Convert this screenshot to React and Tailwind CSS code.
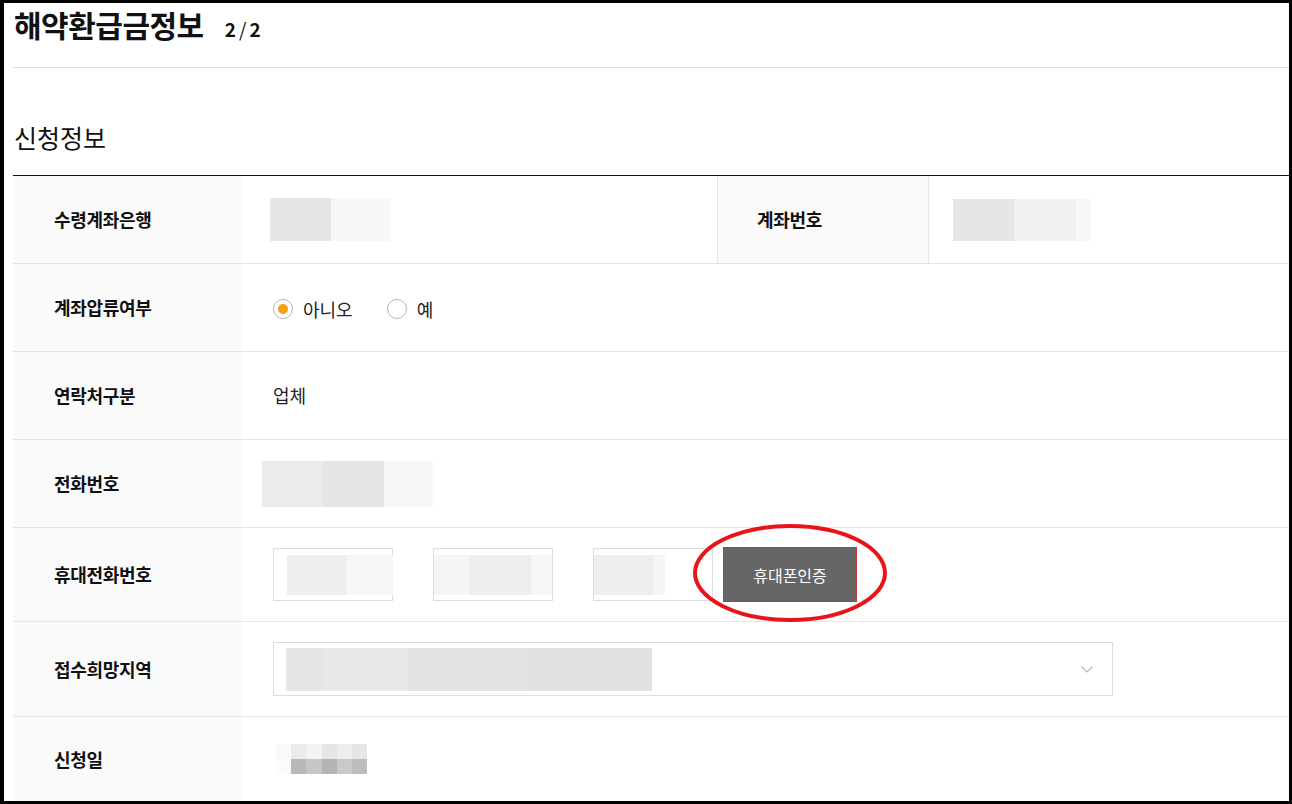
import React from 'react';

const font = { fontFamily: '"Noto Sans CJK KR", "Noto Sans", sans-serif' };

const Label = ({ children }) => (
  <div className="w-[229px] shrink-0 bg-[#fafafa] flex items-center pl-[41px] text-[18px] font-bold text-[#111] tracking-[-0.3px]">
    {children}
  </div>
);

const Blur = ({ blocks, h }) => (
  <div className={`flex ${h}`}>
    {blocks.map(([w, c], i) => (
      <div key={i} className={`${w} ${c}`}></div>
    ))}
  </div>
);

const Radio = ({ checked, label }) => (
  <label className="flex items-center gap-[10px]">
    <span className="w-[20px] h-[20px] rounded-full border border-[#b5b5b5] bg-white flex items-center justify-center">
      {checked && <span className="w-[10px] h-[10px] rounded-full bg-[#f2a20c]"></span>}
    </span>
    <span className="text-[18px] text-[#222]">{label}</span>
  </label>
);

const PhoneBox = ({ blocks, pl }) => (
  <div className={`w-[120px] h-[53px] border border-[#dcdcdc] bg-white flex items-center ${pl}`}>
    <Blur h="h-[40px]" blocks={blocks} />
  </div>
);

export default function App() {
  return (
    <div style={font} className="w-[1292px] h-[804px] bg-white border-l-4 border-r-[3px] border-t-[3px] border-b-[3px] border-black overflow-hidden">
      <div className="pl-[9px]">
        <div className="h-[64px] flex items-baseline pl-[1px] pt-[2px]">
          <h1 className="text-[30px] leading-[38px] font-bold text-[#111] tracking-[-0.5px]">해약환급금정보</h1>
          <span className="ml-[21px] text-[19px] font-bold text-[#111]">
            2<span className="font-normal mx-[3px]">/</span>2
          </span>
        </div>
        <div className="h-px bg-[#dddddd]"></div>
        <div className="h-[107px] pt-[53px] pl-[1px]">
          <h2 className="text-[25px] leading-[32px] text-[#111]">신청정보</h2>
        </div>

        <div className="border-t border-[#111]">
          {/* 수령계좌은행 / 계좌번호 */}
          <div className="flex h-[88px] border-b border-[#e5e5e5]">
            <Label>수령계좌은행</Label>
            <div className="w-[475px] flex items-center pl-[28px]">
              <Blur h="h-[43px]" blocks={[['w-[61px]', 'bg-[#e6e6e6]'], ['w-[60px]', 'bg-[#f8f8f8]']]} />
            </div>
            <div className="w-[212px] shrink-0 bg-[#fafafa] border-l border-r border-[#e5e5e5] flex items-center pl-[39px] text-[18px] font-bold text-[#111] tracking-[-0.3px]">
              계좌번호
            </div>
            <div className="flex-1 flex items-center pl-[24px]">
              <Blur h="h-[42px]" blocks={[['w-[61px]', 'bg-[#e6e6e6]'], ['w-[62px]', 'bg-[#f0f0f0]'], ['w-[15px]', 'bg-[#f8f8f8]']]} />
            </div>
          </div>

          {/* 계좌압류여부 */}
          <div className="flex h-[88px] border-b border-[#e5e5e5]">
            <Label>계좌압류여부</Label>
            <div className="flex items-center gap-[34px] pl-[31px] pt-[3px]">
              <Radio checked label="아니오" />
              <Radio label="예" />
            </div>
          </div>

          {/* 연락처구분 */}
          <div className="flex h-[88px] border-b border-[#e5e5e5]">
            <Label>연락처구분</Label>
            <div className="flex items-center pl-[31px] text-[18px] text-[#222]">업체</div>
          </div>

          {/* 전화번호 */}
          <div className="flex h-[88px] border-b border-[#e5e5e5]">
            <Label>전화번호</Label>
            <div className="flex items-center pl-[20px]">
              <Blur h="h-[46px]" blocks={[['w-[61px]', 'bg-[#ebebeb]'], ['w-[61px]', 'bg-[#e6e6e6]'], ['w-[49px]', 'bg-[#f8f8f8]']]} />
            </div>
          </div>

          {/* 휴대전화번호 */}
          <div className="flex h-[94px] border-b border-[#e5e5e5]">
            <Label>휴대전화번호</Label>
            <div className="flex items-center pl-[31px] gap-[40px]">
              <PhoneBox pl="pl-[13px]" blocks={[['w-[59px]', 'bg-[#ededed]'], ['w-[47px]', 'bg-[#f6f6f6]']]} />
              <PhoneBox pl="pl-0" blocks={[['w-[36px]', 'bg-[#f5f5f5]'], ['w-[61px]', 'bg-[#ededed]'], ['w-[21px]', 'bg-[#f7f7f7]']]} />
              <div className="flex items-center gap-[10px]">
                <PhoneBox pl="pl-0" blocks={[['w-[59px]', 'bg-[#ededed]'], ['w-[12px]', 'bg-[#f5f5f5]']]} />
                <div className="relative">
                  <button className="w-[134px] h-[55px] bg-[#666666] border border-[#c0392b] text-white text-[16px]">
                    휴대폰인증
                  </button>
                  <svg className="absolute left-[-31px] top-[-24px] pointer-events-none" width="196" height="100" viewBox="0 0 196 100">
                    <ellipse cx="98" cy="50" rx="95" ry="47" fill="none" stroke="#e8141a" strokeWidth="4" />
                  </svg>
                </div>
              </div>
            </div>
          </div>

          {/* 접수희망지역 */}
          <div className="flex h-[95px] border-b border-[#e5e5e5]">
            <Label>접수희망지역</Label>
            <div className="flex items-center pl-[31px]">
              <div className="w-[840px] h-[54px] border border-[#dcdcdc] bg-white flex items-center justify-between pl-[12px] pr-[18px]">
                <Blur h="h-[43px]" blocks={[['w-[37px]', 'bg-[#e6e6e6]'], ['w-[85px]', 'bg-[#e8e8e8]'], ['w-[122px]', 'bg-[#e3e3e3]'], ['w-[122px]', 'bg-[#e1e1e1]']]} />
                <svg width="14" height="10" viewBox="0 0 14 10">
                  <path d="M1.5 2.5 L7 8 L12.5 2.5" fill="none" stroke="#b8b8b8" strokeWidth="1.2" />
                </svg>
              </div>
            </div>
          </div>

          {/* 신청일 */}
          <div className="flex h-[84px]">
            <Label>신청일</Label>
            <div className="flex items-center pl-[34px]">
              <div className="flex flex-col">
                <Blur h="h-[15px]" blocks={[['w-[15px]', 'bg-[#f9f9f9]'], ['w-[15px]', 'bg-[#ebebeb]'], ['w-[16px]', 'bg-[#f3f3f3]'], ['w-[15px]', 'bg-[#e6e6e6]'], ['w-[15px]', 'bg-[#ededed]'], ['w-[15px]', 'bg-[#e6e6e6]']]} />
                <Blur h="h-[15px]" blocks={[['w-[15px]', 'bg-[#fbfbfb]'], ['w-[15px]', 'bg-[#b9b9b9]'], ['w-[16px]', 'bg-[#c6c6c6]'], ['w-[15px]', 'bg-[#b4b4b4]'], ['w-[15px]', 'bg-[#c9c9c9]'], ['w-[15px]', 'bg-[#bdbdbd]']]} />
              </div>
            </div>
          </div>
        </div>
      </div>
    </div>
  );
}
